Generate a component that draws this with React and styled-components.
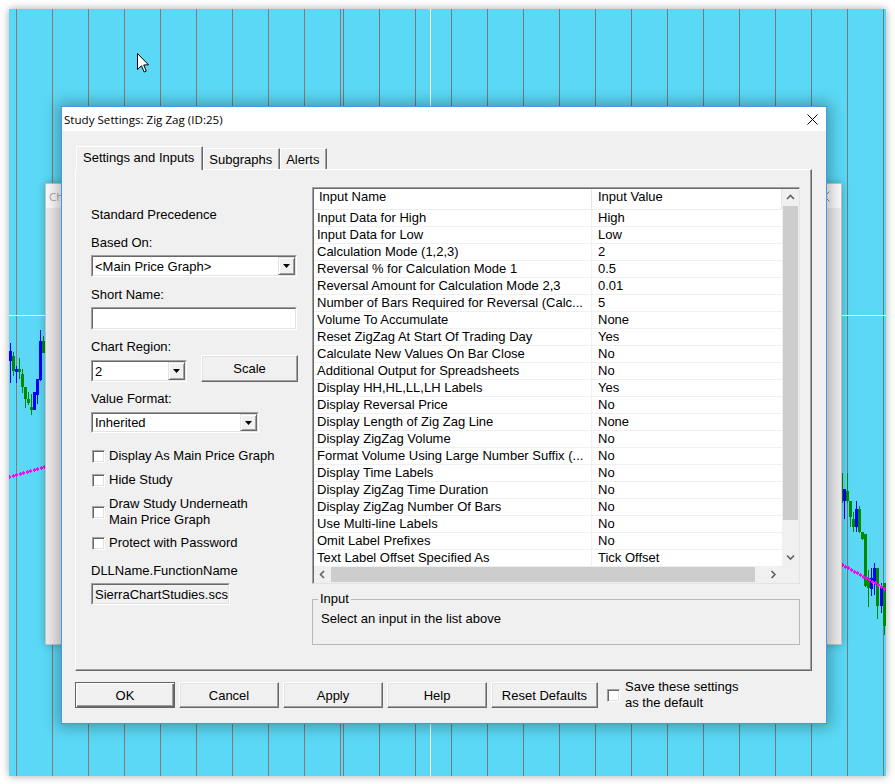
import React from 'react';
import styled, { createGlobalStyle, css } from 'styled-components';

const GlobalStyle = createGlobalStyle`
  html, body { margin: 0; padding: 0; background: #ffffff; }
  body { font-family: "Liberation Sans", Arial, sans-serif; font-size: 13px; color: #000; }
  *, *::before, *::after { box-sizing: border-box; }
`;

// chart drawing data, page coordinates (chart starts at 9,9)
const leftCandles = [
  [9, 351, 361, 343, 383, 'b'],
  [12, 356, 371, 352, 376, 'g'],
  [15, 369, 372, 366, 383, 'b'],
  [18, 369, 372, 358, 379, 'g'],
  [21, 374, 387, 369, 393, 'g'],
  [24, 387, 399, 387, 408, 'g'],
  [27, 399, 403, 392, 405, 'g'],
  [30, 407, 410, 394, 415, 'g'],
  [33, 392, 410, 392, 410, 'b'],
  [36, 379, 395, 379, 404, 'b'],
  [39, 341, 380, 330, 381, 'b'],
  [42, 341, 353, 336, 353, 'g'],
];
const rightCandles = [
  [840, 473, 503, 473, 503, 'g'],
  [843, 489, 501, 489, 519, 'b'],
  [846, 491, 501, 473, 503, 'g'],
  [849, 501, 517, 501, 527, 'g'],
  [852, 519, 527, 512, 532, 'g'],
  [855, 509, 527, 501, 532, 'b'],
  [858, 509, 532, 506, 533, 'g'],
  [861, 532, 539, 532, 540, 'g'],
  [864, 534, 586, 534, 587, 'g'],
  [867, 578, 588, 570, 607, 'g'],
  [870, 578, 589, 568, 596, 'b'],
  [873, 568, 583, 563, 595, 'b'],
  [876, 568, 606, 568, 619, 'g'],
  [880, 588, 606, 583, 613, 'b'],
  [883, 583, 626, 583, 635, 'g'],
];

const gridLines = [];
for (let k = 0; k < 10; k++) gridLines.push(16 + 36 * k);
for (let k = 0; k < 16; k++) gridLines.push(343 + 36 * k);

const dots = [];
for (let x = 9; x <= 44; x += 3.5) dots.push([x, 476 - (x - 9) * 0.29]);
for (let x = 842; x <= 887; x += 3) dots.push([x, 564 + (x - 842) * 0.56]);

const inputs = [
  ['Input Data for High', 'High'],
  ['Input Data for Low', 'Low'],
  ['Calculation Mode (1,2,3)', '2'],
  ['Reversal % for Calculation Mode 1', '0.5'],
  ['Reversal Amount for Calculation Mode 2,3', '0.01'],
  ['Number of Bars Required for Reversal (Calc...', '5'],
  ['Volume To Accumulate', 'None'],
  ['Reset ZigZag At Start Of Trading Day', 'Yes'],
  ['Calculate New Values On Bar Close', 'No'],
  ['Additional Output for Spreadsheets', 'No'],
  ['Display HH,HL,LL,LH Labels', 'Yes'],
  ['Display Reversal Price', 'No'],
  ['Display Length of Zig Zag Line', 'None'],
  ['Display ZigZag Volume', 'No'],
  ['Format Volume Using Large Number Suffix (...', 'No'],
  ['Display Time Labels', 'No'],
  ['Display ZigZag Time Duration', 'No'],
  ['Display ZigZag Number Of Bars', 'No'],
  ['Use Multi-line Labels', 'No'],
  ['Omit Label Prefixes', 'No'],
  ['Text Label Offset Specified As', 'Tick Offset'],
];

export default function App() {
  return (
    <>
      <GlobalStyle />
      <Screen>
        <Chart>
          <ChartDrawing />
          <Pointer width="13" height="21" viewBox="0 0 13 21">
            <path d="M0.5 0.5 L0.5 16.5 L4.5 12.8 L7.2 19 L9.3 18.1 L6.7 12 L11.5 11.8 Z" fill="#fff" stroke="#000" strokeWidth="1" strokeLinejoin="miter" />
          </Pointer>

          <BackWindow>
            <BackTitle>
              <span>Chart Studies</span>
              <XIcon color="#8a8a8a" />
            </BackTitle>
          </BackWindow>

          <Dialog>
            <TitleBar>
              <Title>Study Settings: Zig Zag (ID:25)</Title>
              <CloseBox><XIcon color="#000" /></CloseBox>
            </TitleBar>

            <DialogBody>
              <TabStrip>
                <Tab $active>Settings and Inputs</Tab>
                <Tab>Subgraphs</Tab>
                <Tab>Alerts</Tab>
              </TabStrip>

              <TabPanel>
                <LeftCol>
                  <Label $mt={20}>Standard Precedence</Label>
                  <Label $mt={12}>Based On:</Label>
                  <Select $mt={4} $w={206} value="<Main Price Graph>" />
                  <Label $mt={10}>Short Name:</Label>
                  <TextBox $mt={4} $w={206} $h={23} />
                  <Label $mt={9}>Chart Region:</Label>
                  <RegionRow>
                    <Select $w={96} value="2" />
                    <Btn $w={97} $h={27}>Scale</Btn>
                  </RegionRow>
                  <Label $mt={9}>Value Format:</Label>
                  <Select $mt={5} $w={168} $h={21} value="Inherited" />
                  <CheckRow $mt={15}><Check /><span>Display As Main Price Graph</span></CheckRow>
                  <CheckRow $mt={8}><Check /><span>Hide Study</span></CheckRow>
                  <CheckRow $mt={8}><Check /><span>Draw Study Underneath<br />Main Price Graph</span></CheckRow>
                  <CheckRow $mt={7}><Check /><span>Protect with Password</span></CheckRow>
                  <Label $mt={12}>DLLName.FunctionName</Label>
                  <TextBox $mt={4} $w={139} $h={22} $readOnly>SierraChartStudies.scs</TextBox>
                </LeftCol>

                <RightCol>
                  <ListBox>
                    <ListInner>
                      <ListArea>
                        <HeaderRow>
                          <HeadCell>Input Name</HeadCell>
                          <HeadCell $value>Input Value</HeadCell>
                        </HeaderRow>
                        {inputs.map(([name, value]) => (
                          <Row key={name}>
                            <NameCell>{name}</NameCell>
                            <ValueCell>{value}</ValueCell>
                          </Row>
                        ))}
                      </ListArea>
                      <VScroll>
                        <ArrowBox><Chevron dir="up" /></ArrowBox>
                        <VThumb />
                        <Track />
                        <ArrowBox><Chevron dir="down" /></ArrowBox>
                      </VScroll>
                      <HScroll>
                        <ArrowBox><Chevron dir="left" /></ArrowBox>
                        <HThumb />
                        <Track />
                        <ArrowBox><Chevron dir="right" /></ArrowBox>
                      </HScroll>
                      <Corner />
                    </ListInner>
                  </ListBox>

                  <GroupBox>
                    <legend>Input</legend>
                    Select an input in the list above
                  </GroupBox>
                </RightCol>
              </TabPanel>

              <ButtonRow>
                <Btn $primary>OK</Btn>
                <Btn>Cancel</Btn>
                <Btn>Apply</Btn>
                <Btn>Help</Btn>
                <Btn $w={107}>Reset Defaults</Btn>
                <SaveCheck>
                  <Check />
                  <span>Save these settings<br />as the default</span>
                </SaveCheck>
              </ButtonRow>
            </DialogBody>
          </Dialog>
        </Chart>
      </Screen>
    </>
  );
}

function ChartDrawing() {
  const candle = ([x, bt, bb, wt, wb, c], i) => {
    const col = c === 'b' ? '#0000ff' : '#008a00';
    return (
      <g key={i} stroke={col} fill="none" strokeWidth="1">
        <line x1={x - 9 + 1.5} x2={x - 9 + 1.5} y1={wt - 9} y2={wb - 9} />
        <rect x={x - 9 + 0.5} y={bt - 9 + 0.5} width="2" height={Math.max(bb - bt - 1, 1)} />
      </g>
    );
  };
  return (
    <Canvas width="877" height="767" shapeRendering="crispEdges">
      {gridLines.map((x) => (
        <line key={x} x1={x - 9 + 0.5} x2={x - 9 + 0.5} y1="0" y2="767" stroke={x < 342 ? '#8d7673' : '#6f7b83'} strokeWidth="1" />
      ))}
      <line x1="421.5" x2="421.5" y1="0" y2="767" stroke="#ffffff" strokeWidth="1" />
      <line x1="0" x2="877" y1="306.5" y2="306.5" stroke="#ffffff" strokeWidth="1" />
      {leftCandles.map(candle)}
      {rightCandles.map(candle)}
      {dots.map(([x, y], i) => (
        <g key={i} fill="#ff00ff">
          <rect x={Math.round(x - 9 - 1)} y={Math.round(y - 9)} width="3" height="2" />
          <rect x={Math.round(x - 9)} y={Math.round(y - 9 - 1)} width="1" height="4" />
        </g>
      ))}
    </Canvas>
  );
}

function XIcon({ color }) {
  return (
    <svg width="11" height="11" viewBox="0 0 11 11">
      <path d="M0.5 0.5 L10.5 10.5 M10.5 0.5 L0.5 10.5" stroke={color} strokeWidth="1" />
    </svg>
  );
}

function Chevron({ dir }) {
  const paths = {
    up: 'M1 5 L4.5 1.5 L8 5',
    down: 'M1 1.5 L4.5 5 L8 1.5',
    left: 'M5 1 L1.5 4.5 L5 8',
    right: 'M1.5 1 L5 4.5 L1.5 8',
  };
  const horiz = dir === 'left' || dir === 'right';
  return (
    <svg width={horiz ? 7 : 9} height={horiz ? 9 : 7} viewBox={horiz ? '0 0 7 9' : '0 0 9 7'}>
      <path d={paths[dir]} fill="none" stroke="#606060" strokeWidth="1.6" />
    </svg>
  );
}

function Select({ value, $w, $h, $mt }) {
  return (
    <SelectBox $w={$w} $h={$h} $mt={$mt}>
      <SunkenInner>
        <SelectText>{value}</SelectText>
        <DropBtn>
          <svg width="7" height="4" viewBox="0 0 7 4"><polygon points="0,0 7,0 3.5,4" fill="#000" /></svg>
        </DropBtn>
      </SunkenInner>
    </SelectBox>
  );
}

function TextBox({ children, $w, $h, $mt, $readOnly }) {
  return (
    <SelectBox $w={$w} $h={$h} $mt={$mt}>
      <SunkenInner $readOnly={$readOnly}>
        <SelectText>{children}</SelectText>
      </SunkenInner>
    </SelectBox>
  );
}

const Screen = styled.div`
  width: 895px;
  height: 784px;
  padding: 9px 9px 8px 9px;
  background: #ffffff;
`;

const Chart = styled.div`
  position: relative;
  width: 877px;
  height: 767px;
  background: #5ad8f5;
  overflow: hidden;
  box-shadow: 0 0 8px rgba(0, 0, 0, 0.35);
`;

const Canvas = styled.svg`
  position: absolute;
  left: 0;
  top: 0;
`;

const Pointer = styled.svg`
  position: absolute;
  left: 128px;
  top: 44px;
  z-index: 3;
`;

const BackWindow = styled.div`
  position: absolute;
  left: 36px;
  top: 174px;
  width: 797px;
  height: 462px;
  background: #ececec;
  border: 1px solid #c4c4c4;
  box-shadow: 0 0 8px rgba(0, 0, 0, 0.25);
`;

const BackTitle = styled.div`
  height: 24px;
  background: #fafafa;
  display: flex;
  align-items: center;
  justify-content: space-between;
  padding: 0 11px 0 3px;
  font-family: "Open Sans", "Noto Sans", sans-serif;
  font-size: 11.5px;
  color: #a8a8a8;
`;

const Dialog = styled.div`
  position: absolute;
  left: 52px;
  top: 97px;
  width: 766px;
  height: 618px;
  border: 1px solid #4b98dc;
  background: #f0f0f0;
  display: flex;
  flex-direction: column;
  box-shadow: 0 0 14px 3px rgba(0, 0, 0, 0.3);
  z-index: 2;
`;

const TitleBar = styled.div`
  height: 24px;
  background: #ffffff;
  display: flex;
  align-items: center;
  justify-content: space-between;
  padding-left: 2px;
`;

const Title = styled.span`
  font-family: "Open Sans", "Noto Sans", sans-serif;
  font-size: 11.6px;
  color: #000;
`;

const CloseBox = styled.div`
  width: 28px;
  height: 24px;
  display: flex;
  align-items: center;
  justify-content: center;
`;

const DialogBody = styled.div`
  flex: 1;
  display: flex;
  flex-direction: column;
  padding: 15px 14px 15px 13px;
`;

const TabStrip = styled.div`
  height: 23px;
  display: flex;
  align-items: flex-end;
  padding-left: 1px;
  position: relative;
  z-index: 1;
`;

const Tab = styled.div`
  height: 21px;
  padding: 0 7px 0 5px;
  display: flex;
  align-items: center;
  background: #f0f0f0;
  border-top: 1px solid #ffffff;
  border-left: 1px solid #ffffff;
  border-right: 1px solid #696969;
  box-shadow: inset -1px 0 #a0a0a0;
  white-space: nowrap;
  ${(p) => p.$active && css`
    height: 24px;
    margin-bottom: -1px;
    padding: 3px 8px 0 6px;
    align-items: flex-start;
  `}
`;

const TabPanel = styled.div`
  height: 502px;
  display: grid;
  grid-template-columns: 207px 488px;
  column-gap: 14px;
  padding: 17px 11px 0 15px;
  border: 1px solid;
  border-color: #ffffff #696969 #696969 #ffffff;
  box-shadow: inset -1px -1px #a0a0a0;
`;

const LeftCol = styled.div`
  display: flex;
  flex-direction: column;
  align-items: flex-start;
`;

const Label = styled.div`
  margin-top: ${(p) => p.$mt || 0}px;
  line-height: 16px;
  height: 16px;
  white-space: nowrap;
`;

const SelectBox = styled.div`
  margin-top: ${(p) => p.$mt || 0}px;
  width: ${(p) => p.$w}px;
  height: ${(p) => p.$h || 22}px;
  border: 1px solid;
  border-color: #a0a0a0 #ffffff #ffffff #a0a0a0;
  display: flex;
`;

const SunkenInner = styled.div`
  flex: 1;
  min-width: 0;
  display: flex;
  align-items: center;
  border: 1px solid;
  border-color: #696969 #e3e3e3 #e3e3e3 #696969;
  background: ${(p) => (p.$readOnly ? '#f0f0f0' : '#ffffff')};
  padding-left: 2px;
  overflow: hidden;
`;

const SelectText = styled.span`
  flex: 1;
  min-width: 0;
  white-space: nowrap;
  overflow: hidden;
`;

const DropBtn = styled.div`
  width: 17px;
  height: 100%;
  display: flex;
  align-items: center;
  justify-content: center;
  background: #f0f0f0;
  border: 1px solid;
  border-color: #e3e3e3 #696969 #696969 #e3e3e3;
  box-shadow: inset 1px 1px #ffffff, inset -1px -1px #a0a0a0;
`;

const RegionRow = styled.div`
  height: 27px;
  width: 100%;
  display: flex;
  align-items: flex-end;
  justify-content: space-between;
`;

const CheckRow = styled.div`
  margin-top: ${(p) => p.$mt || 0}px;
  display: flex;
  align-items: center;
  gap: 4px;
  padding-left: 1px;
  line-height: 16px;
  white-space: nowrap;
`;

const Check = styled.span`
  flex: none;
  width: 13px;
  height: 13px;
  background: #ffffff;
  border: 1px solid;
  border-color: #a0a0a0 #ffffff #ffffff #a0a0a0;
  box-shadow: inset 1px 1px #696969, inset -1px -1px #e3e3e3;
`;

const Btn = styled.button`
  width: ${(p) => p.$w || 100}px;
  height: ${(p) => p.$h || 26}px;
  padding: 0;
  font: inherit;
  color: #000;
  background: #f0f0f0;
  border: 1px solid;
  border-color: #ffffff #696969 #696969 #ffffff;
  box-shadow: inset -1px -1px #a0a0a0, inset 1px 1px #e3e3e3;
  ${(p) => p.$primary && css`
    border: 1px solid #646464;
    box-shadow: inset 1px 1px #ffffff, inset -1px -1px #696969, inset -2px -2px #a0a0a0;
  `}
`;

const RightCol = styled.div`
  display: flex;
  flex-direction: column;
`;

const ListBox = styled.div`
  height: 397px;
  border: 1px solid;
  border-color: #a0a0a0 #e3e3e3 #e3e3e3 #a0a0a0;
  display: flex;
`;

const ListInner = styled.div`
  flex: 1;
  display: grid;
  grid-template-columns: 1fr 17px;
  grid-template-rows: 1fr 17px;
  border-top: 1px solid #696969;
  border-left: 1px solid #696969;
  background: #ffffff;
  min-width: 0;
`;

const ListArea = styled.div`
  overflow: hidden;
  min-width: 0;
`;

const cols = css`
  display: grid;
  grid-template-columns: 278px 1fr;
`;

const HeaderRow = styled.div`
  ${cols};
  height: 21px;
  border-bottom: 1px solid #ececec;
`;

const HeadCell = styled.div`
  padding: 0 0 0 ${(p) => (p.$value ? 6 : 5)}px;
  line-height: 16px;
  border-right: 1px solid #e5e5e5;
  white-space: nowrap;
`;

const Row = styled.div`
  ${cols};
  height: 17px;
  border-bottom: 1px solid #f0f0f0;
  line-height: 16px;
`;

const NameCell = styled.div`
  padding-left: 3px;
  border-right: 1px solid #f0f0f0;
  white-space: nowrap;
  overflow: hidden;
`;

const ValueCell = styled.div`
  padding-left: 6px;
  white-space: nowrap;
  overflow: hidden;
`;

const VScroll = styled.div`
  display: flex;
  flex-direction: column;
  background: #f0f0f0;
`;

const HScroll = styled.div`
  display: flex;
  background: #f0f0f0;
`;

const ArrowBox = styled.div`
  flex: none;
  width: 17px;
  height: 17px;
  display: flex;
  align-items: center;
  justify-content: center;
`;

const VThumb = styled.div`
  height: 314px;
  margin: 0 1px;
  background: #cdcdcd;
`;

const HThumb = styled.div`
  width: 424px;
  margin: 1px 0;
  background: #cdcdcd;
`;

const Track = styled.div`
  flex: 1;
`;

const Corner = styled.div`
  background: #f0f0f0;
`;

const GroupBox = styled.fieldset`
  margin: 7px 0 0;
  padding: 4px 8px 0;
  height: 54px;
  min-width: 0;
  border: 1px solid #b8b8b8;
  line-height: 16px;

  legend {
    padding: 0 2px;
    margin-left: -3px;
    line-height: 16px;
  }
`;

const ButtonRow = styled.div`
  margin-top: 11px;
  height: 26px;
  display: flex;
  align-items: center;
  gap: 4px;
`;

const SaveCheck = styled.div`
  margin-left: 5px;
  display: flex;
  align-items: center;
  gap: 5px;
  line-height: 16px;
  white-space: nowrap;
`;
